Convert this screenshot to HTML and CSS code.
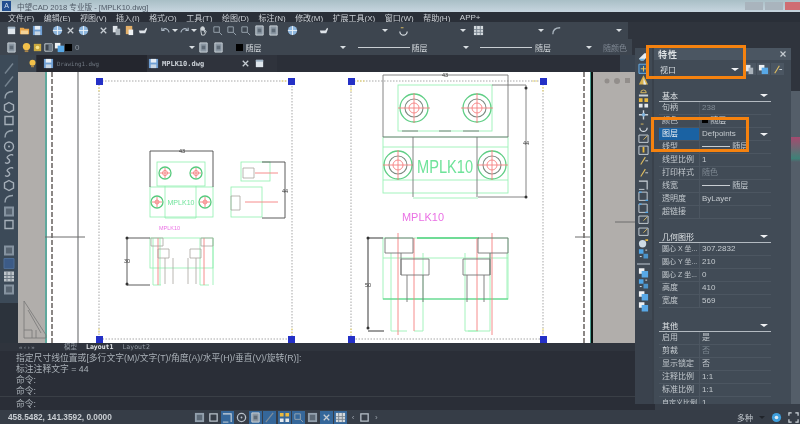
FILE: index.html
```html
<!DOCTYPE html>
<html lang="zh-CN">
<head>
<meta charset="utf-8">
<title>中望CAD 2018 专业版 - [MPLK10.dwg]</title>
<link rel="stylesheet" href="styles.css">
</head>
<body>
<svg class="sprite" width="0" height="0" aria-hidden="true">
  <symbol id="doc" viewBox="0 0 12 12"><path d="M2 2h8v8H2z" fill="#dfe6ec"/><path d="M2 2h8v2H2z" fill="#9fb4c6"/></symbol>
  <symbol id="folder" viewBox="0 0 12 12"><path d="M1 3h4l1 1h5v6H1z" fill="#e9a64b"/><path d="M2 6h8v4H2z" fill="#f3d398"/></symbol>
  <symbol id="save" viewBox="0 0 12 12"><path d="M1 1h10v10H1z" fill="#6f9fd4"/><path d="M3 1h6v4H3z" fill="#e6edf4"/><path d="M3 7h6v4H3z" fill="#c8d6e4"/></symbol>
  <symbol id="globe" viewBox="0 0 12 12"><circle cx="6" cy="6" r="5" fill="#8fb7de"/><path d="M1 6h10M6 1v10" stroke="#e9f0f6"/></symbol>
  <symbol id="x" viewBox="0 0 12 12"><path d="M3 3l6 6M9 3l-6 6" stroke="#c6ccd2" stroke-width="1.4"/></symbol>
  <symbol id="copy" viewBox="0 0 12 12"><path d="M2 1h5v7H2z" fill="#dfe4e9"/><path d="M5 4h5v7H5z" fill="#aab3bb"/></symbol>
  <symbol id="paste" viewBox="0 0 12 12"><path d="M2 1h7v9H2z" fill="#e3b06a"/><path d="M5 5h5v6H5z" fill="#eef1f3"/></symbol>
  <symbol id="brush" viewBox="0 0 12 12"><path d="M2 6h6l2-3 1 1-2 5H3z" fill="#dfe4e9"/></symbol>
  <symbol id="undo" viewBox="0 0 12 12"><path d="M10 8C9 4 6 3 3 5M2 3v3h3" fill="none" stroke="#aebac6" stroke-width="1.2"/></symbol>
  <symbol id="redo" viewBox="0 0 12 12"><path d="M2 8c1-4 4-5 7-3M10 3v3H7" fill="none" stroke="#aebac6" stroke-width="1.2"/></symbol>
  <symbol id="hand" viewBox="0 0 12 12"><path d="M3 6V3h1v3-4h1v4-4h1v4-3h1v5l1-2 1 1-2 4H4z" fill="none" stroke="#cfd5da"/></symbol>
  <symbol id="zoom" viewBox="0 0 12 12"><path d="M2 2h6v6H2z" fill="none" stroke="#9aa6b0"/><path d="M8 8l3 3" stroke="#9aa6b0"/></symbol>
  <symbol id="page" viewBox="0 0 12 12"><path d="M2 1h8v10H2z" fill="#8b97a3" stroke="#cfd6dc"/><path d="M4 4h4v4H4z" fill="#5f6b77"/></symbol>
  <symbol id="bulb" viewBox="0 0 12 12"><circle cx="6" cy="5" r="4" fill="#f2c04a"/><path d="M4 9h4v2H4z" fill="#a8844a"/></symbol>
  <symbol id="sun" viewBox="0 0 12 12"><path d="M2 2h8v8H2z" fill="#c9a83f"/><circle cx="6" cy="6" r="2" fill="#f7e28a"/></symbol>
  <symbol id="lock" viewBox="0 0 12 12"><path d="M2 2h8v8H2z" fill="none" stroke="#cfd6dc"/><path d="M6 2h4v8H6z" fill="#6f7b87"/></symbol>
  <symbol id="layers" viewBox="0 0 12 12"><path d="M1 1h6v6H1z" fill="#eef1f3"/><path d="M4 4h7v7H4z" fill="#58a8e6"/></symbol>
  <symbol id="line" viewBox="0 0 12 12"><path d="M2 11L10 1" stroke="#7f8d9a" stroke-width="1.4"/></symbol>
  <symbol id="arc" viewBox="0 0 12 12"><path d="M2 10C2 5 5 3 10 3" fill="none" stroke="#aab5bf" stroke-width="1.4"/></symbol>
  <symbol id="hex" viewBox="0 0 12 12"><path d="M6 1l4.500 2.500v5L6 11 1.500 8.500v-5z" fill="none" stroke="#b8c1ca" stroke-width="1.4"/></symbol>
  <symbol id="rect" viewBox="0 0 12 12"><path d="M2 2h8v8H2z" fill="none" stroke="#b8c1ca" stroke-width="1.4"/></symbol>
  <symbol id="circ" viewBox="0 0 12 12"><circle cx="6" cy="6" r="4.500" fill="none" stroke="#b8c1ca" stroke-width="1.400"/><circle cx="6" cy="6" r="1" fill="#b8c1ca"/></symbol>
  <symbol id="wave" viewBox="0 0 12 12"><path d="M2 9c3 2 6-1 4-3S3 4 6 2s4 0 4 0" fill="none" stroke="#b8c1ca" stroke-width="1.4"/></symbol>
  <symbol id="fill" viewBox="0 0 12 12"><path d="M1 1h10v10H1z" fill="#92a0ad"/><path d="M3 3h6v6H3z" fill="#5c6976"/></symbol>
  <symbol id="fillblue" viewBox="0 0 12 12"><path d="M1 1h10v10H1z" fill="#3d5f90" stroke="#51729f"/></symbol>
  <symbol id="table" viewBox="0 0 12 12"><path d="M1 1h10v10H1z" fill="#d4dade"/><path d="M1 5h10M1 8h10M4 1v10M8 1v10" stroke="#7a8691"/></symbol>
  <symbol id="eraser" viewBox="0 0 12 12"><path d="M1 8l6-6h4v3l-5 5H3z" fill="#e6ebef"/><path d="M1 8l2 2h3l1-2z" fill="#68b3e8"/></symbol>
  <symbol id="bluebox" viewBox="0 0 12 12"><path d="M1 1h10v10H1z" fill="#33597f" stroke="#6fb5ea"/><path d="M6 3v6M3 6h6" stroke="#f0c85a"/></symbol>
  <symbol id="tri" viewBox="0 0 12 12"><path d="M6 1l5 10H1z" fill="#d8b14d"/><path d="M6 4l3 7H6z" fill="#e6ebef"/></symbol>
  <symbol id="scale" viewBox="0 0 12 12"><path d="M3 7a3 3 0 016 0z" fill="none" stroke="#e0be60"/><path d="M1 9h10v2H1z" fill="#c9d1d8"/></symbol>
  <symbol id="grid" viewBox="0 0 12 12"><path d="M1 1h4v4H1zM7 1h4v4H7z" fill="#e9b93f"/><path d="M1 7h4v4H1zM7 7h4v4H7z" fill="#e4e8eb"/></symbol>
  <symbol id="move" viewBox="0 0 12 12"><path d="M6 1v10M1 6h10" stroke="#cdd5dc" stroke-width="1.500"/><circle cx="6" cy="6" r="2" fill="#7fb2dc"/></symbol>
  <symbol id="rot" viewBox="0 0 12 12"><path d="M2 7a4 4 0 008 0" fill="none" stroke="#d7dde2" stroke-width="1.300"/><path d="M3 3h3" stroke="#e0be60"/></symbol>
  <symbol id="stretch" viewBox="0 0 12 12"><path d="M1 3h10v8H1z" fill="none" stroke="#cdd5dc"/><path d="M6 8l4-4" stroke="#e0be60"/></symbol>
  <symbol id="mid" viewBox="0 0 12 12"><path d="M1 2h10v9H1z" fill="none" stroke="#cdd5dc"/><path d="M6 3v6" stroke="#e9b93f" stroke-width="2"/></symbol>
  <symbol id="slash" viewBox="0 0 12 12"><path d="M3 10l5-8" stroke="#e0be60" stroke-width="1.200"/><path d="M8 6h3" stroke="#cdd5dc"/></symbol>
  <symbol id="corner" viewBox="0 0 12 12"><path d="M1 2h9v9" fill="none" stroke="#cdd5dc" stroke-width="1.200"/><path d="M1 11h6" stroke="#cdd5dc"/></symbol>
  <symbol id="cornerb" viewBox="0 0 12 12"><path d="M1 2h9v9H1z" fill="none" stroke="#cdd5dc"/><path d="M1 2h3M8 11h3" stroke="#4fa6e8" stroke-width="1.500"/></symbol>
  <symbol id="ball" viewBox="0 0 12 12"><circle cx="5" cy="7" r="4" fill="#cfdbe5"/><path d="M8 2h3v2H8z" fill="#e9b93f"/></symbol>
  <symbol id="dots" viewBox="0 0 12 12"><path d="M1 1h5v5H1z" fill="#4fa6e8"/><path d="M6 6h5v5H6z" fill="#4fa6e8" opacity=".8"/><path d="M8 2h2M2 9h2" stroke="#e4e8eb"/></symbol>
  <symbol id="gear" viewBox="0 0 12 12"><circle cx="6" cy="6" r="5" fill="#3f9fdc"/><circle cx="6" cy="6" r="2" fill="#dfeaf2"/></symbol>
  <symbol id="full" viewBox="0 0 12 12"><path d="M1 4V1h3M8 1h3v3M11 8v3H8M4 11H1V8" fill="none" stroke="#cfd6dc" stroke-width="1.300"/></symbol>
</svg>

<div class="app">
  <div class="blurred">
    <header class="titlebar">
      <span class="logo">A</span>
      <span class="title">中望CAD 2018 专业版 - [MPLK10.dwg]</span>
      <span class="winbtns"><i class="wb"></i><i class="wb"></i><i class="wb wb-close"></i></span>
    </header>

    <nav class="menubar">
      <span>文件(F)</span><span>编辑(E)</span><span>视图(V)</span><span>插入(I)</span><span>格式(O)</span><span>工具(T)</span><span>绘图(D)</span><span>标注(N)</span><span>修改(M)</span><span>扩展工具(X)</span><span>窗口(W)</span><span>帮助(H)</span><span>APP+</span>
    </nav>

    <section class="toolbars">
      <div class="tb-row tb-row1">
        <div class="tools t-a"><svg class="i"><use href="#doc"/></svg><svg class="i"><use href="#folder"/></svg><svg class="i"><use href="#save"/></svg></div>
        <div class="tools t-b"><svg class="i"><use href="#globe"/></svg><svg class="i"><use href="#x"/></svg><svg class="i"><use href="#globe"/></svg></div>
        <div class="tools t-c"><svg class="i"><use href="#x"/></svg><svg class="i"><use href="#copy"/></svg><svg class="i"><use href="#paste"/></svg><svg class="i"><use href="#brush"/></svg></div>
        <div class="tools t-d"><svg class="i"><use href="#undo"/></svg><b class="arrow"></b><svg class="i"><use href="#redo"/></svg><b class="arrow"></b><svg class="i"><use href="#hand"/></svg><svg class="i z"><use href="#zoom"/></svg><svg class="i z"><use href="#zoom"/></svg><svg class="i z"><use href="#zoom"/></svg></div>
        <div class="tools t-e"><svg class="i"><use href="#page"/></svg><svg class="i"><use href="#page"/></svg><svg class="i i-gap"><use href="#globe"/></svg></div>
        <div class="combo c-1"><svg class="i"><use href="#brush"/></svg><b class="arrow"></b></div>
        <div class="combo c-2"><svg class="i"><use href="#rot"/></svg><b class="arrow"></b></div>
        <div class="combo c-3"><svg class="i"><use href="#table"/></svg><b class="arrow"></b></div>
        <div class="combo c-4"><svg class="i"><use href="#arc"/></svg><b class="arrow"></b></div>
      </div>
      <div class="tb-row tb-row2">
        <svg class="i i-first"><use href="#page"/></svg>
        <div class="tools t-f"><svg class="i"><use href="#bulb"/></svg><svg class="i"><use href="#sun"/></svg><svg class="i"><use href="#lock"/></svg><svg class="i"><use href="#layers"/></svg><i class="black"></i><span class="zero">0</span></div>
        <b class="arrow a-layer"></b>
        <div class="tools t-g"><svg class="i"><use href="#page"/></svg><svg class="i"><use href="#page"/></svg></div>
        <div class="combo c-5"><i class="black"></i><span>随层</span><b class="arrow"></b></div>
        <div class="combo c-6"><i class="ln"></i><span>随层</span><b class="arrow"></b></div>
        <div class="combo c-7"><i class="ln"></i><span>随层</span><b class="arrow"></b></div>
        <span class="dim c-8">随颜色</span>
      </div>
    </section>

    <div class="tabs">
      <svg class="i tab-icon"><use href="#bulb"/></svg>
      <div class="tab tab-off"><svg class="i"><use href="#save"/></svg><span>Drawing1.dwg</span></div>
      <div class="tab tab-on"><svg class="i"><use href="#save"/></svg><span>MPLK10.dwg</span><svg class="i tab-x"><use href="#x"/></svg><svg class="i"><use href="#doc"/></svg></div>
    </div>

    <main class="work">
      <aside class="leftbar">
        <svg class="t"><use href="#line"/></svg><svg class="t"><use href="#line"/></svg><svg class="t"><use href="#arc"/></svg><svg class="t"><use href="#hex"/></svg><svg class="t"><use href="#rect"/></svg><svg class="t"><use href="#arc"/></svg><svg class="t"><use href="#circ"/></svg><svg class="t"><use href="#wave"/></svg><svg class="t"><use href="#wave"/></svg><svg class="t"><use href="#hex"/></svg><svg class="t"><use href="#arc"/></svg><svg class="t"><use href="#fill"/></svg><svg class="t"><use href="#rect"/></svg>
        <span class="t-space"></span>
        <svg class="t"><use href="#fill"/></svg><svg class="t"><use href="#fillblue"/></svg><svg class="t"><use href="#table"/></svg><svg class="t"><use href="#fill"/></svg>
      </aside>
      <div class="canvas">
        <svg class="drawing" viewBox="18 72 617 271" width="617" height="271">
          <rect x="18" y="72" width="617" height="271" fill="#b1aeab"/>
          <rect x="45" y="72" width="2" height="271" fill="#5fa89c"/>
          <rect x="47" y="72" width="543" height="271" fill="#fff"/>
          <rect x="590" y="72" width="1" height="271" fill="#4c9c90"/>
          <rect x="591" y="72" width="2" height="271" fill="#0c1210"/>
          <path d="M52 72V343M584 72V343" stroke="#8b8785" stroke-width="2" stroke-dasharray="5 2"/>
          <path d="M78 72V343" stroke="#77797b" stroke-width="1.200"/>
          <path d="M45 237H85M575 237H590M615 222H635" stroke="#6c6c6c"/>
          <g fill="none" stroke="#777" stroke-width=".8"><path d="M24 301L46 335V338H24Z"/><path d="M28 310L41 333M24 330h8v8M36 330v8"/></g>
          <g fill="#8f8b88" opacity=".9"><circle cx="607" cy="81" r="2.500"/><circle cx="617" cy="81" r="3"/><rect x="625" y="78" width="5" height="5"/></g>

          <g fill="none" stroke="#a7a7a7" stroke-dasharray="1.500 1.500">
            <path d="M99 81H292V339H99ZM351 81H543V339H351Z"/>
          </g>
          <g stroke="#f1d960" stroke-dasharray="1.500 1.500" fill="none"><path d="M286 81h-6M357 81h8M99 87v6M99 333v-6M292 333v-6M351 87v6M543 87v6M351 333v-6M543 333v-6M537 81h-6"/></g>
          <g fill="#2430c6">
            <rect x="96" y="78" width="7" height="7"/><rect x="288" y="78" width="7" height="7"/><rect x="96" y="336" width="7" height="7"/><rect x="288" y="336" width="7" height="7"/>
            <rect x="348" y="78" width="7" height="7"/><rect x="540" y="78" width="7" height="7"/><rect x="348" y="336" width="7" height="7"/><rect x="540" y="336" width="7" height="7"/>
          </g>

          <!-- small view -->
          <g fill="none" stroke="#8ff0ae" stroke-width=".8">
            <rect x="157" y="162" width="48" height="24"/><rect x="150" y="187" width="63" height="30"/>
            <rect x="241" y="162" width="29" height="19"/><rect x="231" y="187" width="31" height="30"/>
            <rect x="150" y="238" width="63" height="30"/>
            <path d="M165 186V218H196V186M153 238v47h8M200 238v47h9M160 238v47M213 238v47"/>
          </g>
          <g fill="none" stroke="#58c97d" stroke-width="1.300">
            <circle cx="165" cy="173" r="6"/><circle cx="196" cy="173" r="6"/><circle cx="157" cy="202" r="6"/><circle cx="205" cy="202" r="6"/>
          </g>
          <g fill="none" stroke="#f58080" stroke-width=".9">
            <circle cx="165" cy="173" r="2.500"/><circle cx="196" cy="173" r="2.500"/><circle cx="157" cy="202" r="2"/><circle cx="205" cy="202" r="2"/>
            <path d="M160 173h10M191 173h10M152 202h10M200 202h10M165 168v10M196 168v10M157 197v10M205 197v10M255 173h23M245 202h33M158 238v47M204 238v47"/>
          </g>
          <g fill="none" stroke="#4a4a4a" stroke-width=".9">
            <path d="M150 187V151H213V187M127 238V285H150M127 238H150M262 162H285V218H262"/>
          </g>
          <g fill="none" stroke="#a8a49f" stroke-width=".8">
            <path d="M243 168h11v10h-11zM231 196h9v14h-9zM151 238h12v8h-12zM201 238h12v8h-12zM158 249h11v9h-11zM190 249h11v9h-11zM165 258v26M173 258v26M196 258v26M188 258v26"/>
          </g>
          <g class="dim-t"><text x="182" y="153">43</text><text x="285" y="193">44</text><text x="127" y="263">30</text></g>
          <text class="lbl-g" x="181" y="205" font-size="8" textLength="27" lengthAdjust="spacingAndGlyphs">MPLK10</text>
          <text class="lbl-m" x="169.500" y="230" font-size="6" textLength="21" lengthAdjust="spacingAndGlyphs">MPLK10</text>

          <!-- big view -->
          <g fill="none" stroke="#9af2b6" stroke-width=".9">
            <rect x="398" y="85" width="94" height="46"/><rect x="383" y="137" width="125" height="56"/>
            <path d="M413 198H478M383 180H508M383 147H508"/>
            <rect x="383" y="238" width="125" height="61"/>
            <path d="M383 258h125M391 253V331H407M423 253V331M465 253V331H490V253M507 253v46M414 331h9M468 331h10"/>
          </g>
          <path d="M417 238h62" stroke="#4fd07e" stroke-width="1.500"/>
          <path d="M383 299H508" stroke="#4fd07e" stroke-width="1.200"/>
          <g fill="none" stroke="#5fce85" stroke-width="1.300">
            <circle cx="414" cy="108" r="14"/><circle cx="477" cy="108" r="14"/><circle cx="398" cy="165" r="14"/><circle cx="492" cy="165" r="14"/>
          </g>
          <g fill="none" stroke="#7c8a80" stroke-width="1.100">
            <circle cx="414" cy="108" r="9"/><circle cx="477" cy="108" r="9"/><circle cx="398" cy="165" r="9"/><circle cx="492" cy="165" r="9"/>
          </g>
          <g fill="none" stroke="#f58080" stroke-width=".9">
            <circle cx="414" cy="108" r="5"/><circle cx="477" cy="108" r="5"/><circle cx="398" cy="165" r="5"/><circle cx="492" cy="165" r="5"/>
            <path d="M398 108h32M461 108h32M414 93v30M477 93v30M383 165h30M477 165h31M398 150v30M492 150v30M398 233V335M414 238V331M477 238V331M492 233V335"/>
          </g>
          <g fill="none" stroke="#777" stroke-width=".9">
            <path d="M383 137V75H508V137H383M492 85H526V197H478M413 137v60M477 137v60M402 131h16M439 131h12M463 131h16"/>
            <path d="M385 238h28v15h-28zM478 238h30v15h-30zM401 259h28v16h-28zM463 259h27v16h-27z"/>
            <path d="M407 275v27M423 275v27M467 275v27M484 275v27M401 253v22M490 253v22"/>
          </g>
          <path d="M368 238V328M368 238h15M368 331h16" fill="none" stroke="#7c7c7c" stroke-width="1.500"/>
          <g class="dim-t"><text x="445" y="77">43</text><text x="526" y="145">44</text><text x="368" y="287">50</text></g>
          <text class="lbl-g" x="445" y="173" font-size="19" textLength="56" lengthAdjust="spacingAndGlyphs">MPLK10</text>
          <text class="lbl-m" x="423" y="221" font-size="11" textLength="42" lengthAdjust="spacingAndGlyphs">MPLK10</text>
          <g fill="#333"><circle cx="526" cy="88" r="1.500"/><circle cx="526" cy="197" r="1.500"/><circle cx="368" cy="238" r="1.500"/><circle cx="368" cy="328" r="1.500"/><circle cx="127" cy="238" r="1.500"/><circle cx="127" cy="284" r="1.500"/></g>
        </svg>
      </div>
    </main>

    <div class="layouts">
      <span class="nav">« ‹ › »</span>
      <span class="lt">模型</span>
      <span class="lt lt-on">Layout1</span>
      <span class="lt">Layout2</span>
    </div>

    <section class="command">
      <p>指定尺寸线位置或[多行文字(M)/文字(T)/角度(A)/水平(H)/垂直(V)/旋转(R)]:</p>
      <p>标注注释文字 = 44</p>
      <p>命令:</p>
      <p>命令:</p>
      <p class="prompt">命令:</p>
    </section>

    <footer class="status">
      <span class="coords">458.5482, 141.3592, 0.0000</span>
      <div class="st-icons">
        <span class="st"><svg class="i"><use href="#fill"/></svg></span><span class="st"><svg class="i"><use href="#rect"/></svg></span><span class="st st-on"><svg class="i"><use href="#corner"/></svg></span><span class="st"><svg class="i"><use href="#circ"/></svg></span><span class="st st-on"><svg class="i"><use href="#page"/></svg></span><span class="st st-on"><svg class="i"><use href="#line"/></svg></span><span class="st st-on"><svg class="i"><use href="#grid"/></svg></span><span class="st st-on"><svg class="i"><use href="#zoom"/></svg></span><span class="st"><svg class="i"><use href="#fill"/></svg></span><span class="st st-on"><svg class="i"><use href="#x"/></svg></span><span class="st st-on"><svg class="i"><use href="#table"/></svg></span>
        <span class="st-nav">‹</span><span class="st"><svg class="i"><use href="#rect"/></svg></span><span class="st-nav">›</span>
      </div>
      <div class="st-right"><span>多种</span><b class="arrow arrow-dark"></b><svg class="i"><use href="#gear"/></svg><svg class="i"><use href="#full"/></svg></div>
    </footer>

    <div class="dock">
      <div class="dock-tools">
        <svg class="d"><use href="#eraser"/></svg><svg class="d"><use href="#bluebox"/></svg><svg class="d"><use href="#tri"/></svg><svg class="d"><use href="#scale"/></svg><svg class="d"><use href="#grid"/></svg><svg class="d"><use href="#move"/></svg><svg class="d"><use href="#rot"/></svg><svg class="d"><use href="#stretch"/></svg><svg class="d"><use href="#mid"/></svg><svg class="d"><use href="#slash"/></svg><svg class="d"><use href="#slash"/></svg><svg class="d"><use href="#corner"/></svg><svg class="d"><use href="#cornerb"/></svg><svg class="d"><use href="#cornerb"/></svg><svg class="d"><use href="#stretch"/></svg><svg class="d"><use href="#stretch"/></svg><svg class="d"><use href="#ball"/></svg><svg class="d"><use href="#dots"/></svg>
        <hr class="d-sep">
        <svg class="d"><use href="#layers"/></svg><svg class="d"><use href="#dots"/></svg><svg class="d"><use href="#layers"/></svg><svg class="d"><use href="#layers"/></svg>
      </div>
      <aside class="props">
        <div class="p-title"><strong>特性</strong><svg class="p-close"><use href="#x"/></svg></div>
        <div class="p-select">
          <div class="p-combo"><span>视口</span><b class="arrow arrow-big"></b></div>
          <span class="p-btn"><svg class="i"><use href="#copy"/></svg></span><span class="p-btn"><svg class="i"><use href="#layers"/></svg></span><span class="p-btn"><svg class="i"><use href="#slash"/></svg></span>
        </div>
        <div class="p-body">
          <h3 class="sec"><span>基本</span><b class="arrow arrow-big"></b></h3>
          <div class="row"><span>句柄</span><span class="off">238</span></div>
          <div class="row"><span>颜色</span><span><i class="black black-s"></i> <em>随层</em></span></div>
          <div class="row row-sel"><span>图层</span><span>Defpoints</span><b class="arrow arrow-big"></b></div>
          <div class="row"><span>线型</span><span><i class="ln ln-s"></i> 随层</span></div>
          <div class="row"><span>线型比例</span><span>1</span></div>
          <div class="row"><span>打印样式</span><span class="off">随色</span></div>
          <div class="row"><span>线宽</span><span><i class="ln ln-s"></i> 随层</span></div>
          <div class="row"><span>透明度</span><span>ByLayer</span></div>
          <div class="row"><span>超链接</span><span></span></div>

          <h3 class="sec sec-gap"><span>几何图形</span><b class="arrow arrow-big"></b></h3>
          <div class="row row-tight"><span>圆心 X 坐...</span><span>307.2832</span></div>
          <div class="row row-tight"><span>圆心 Y 坐...</span><span>210</span></div>
          <div class="row row-tight"><span>圆心 Z 坐...</span><span>0</span></div>
          <div class="row"><span>高度</span><span>410</span></div>
          <div class="row"><span>宽度</span><span>569</span></div>

          <h3 class="sec sec-gap"><span>其他</span><b class="arrow arrow-big"></b></h3>
          <div class="row"><span>启用</span><span>是</span></div>
          <div class="row"><span>剪裁</span><span class="off">否</span></div>
          <div class="row"><span>显示锁定</span><span>否</span></div>
          <div class="row"><span>注释比例</span><span>1:1</span></div>
          <div class="row"><span>标准比例</span><span>1:1</span></div>
          <div class="row row-tight"><span>自定义比例</span><span>1</span></div>
        </div>
      </aside>
      <div class="dock-edge"></div>
      <div class="dock-foot"></div>
    </div>
  </div>

  <div class="mark mark-a"></div>
  <div class="mark mark-b"></div>
</div>
</body>
</html>
```
FILE: styles.css
```css
* { box-sizing: border-box; }
html, body { margin: 0; padding: 0; }
body { background: #2a2e37; overflow: hidden; }
.sprite { position: absolute; }
.app {
  position: relative;
  width: 800px;
  height: 424px;
  overflow: hidden;
  font-family: "Liberation Sans", "Noto Sans CJK SC", sans-serif;
  font-size: 8px;
  color: #d5dade;
}
.blurred {
  display: flex;
  flex-direction: column;
  width: 800px;
  height: 424px;
  background: #2a2e37;
  filter: blur(0.7px);
}
.i { width: 11px; height: 11px; flex: none; display: block; }

/* title bar */
.titlebar {
  height: 12px;
  flex: none;
  display: flex;
  align-items: center;
  padding-left: 2px;
  background: linear-gradient(#a9bfc6, #c7d5df);
  color: #4e5965;
  font-size: 7.600px;
  white-space: nowrap;
}
.logo {
  width: 9px;
  height: 10px;
  background: #234f8f;
  color: #cfe0ef;
  font-size: 7px;
  line-height: 10px;
  text-align: center;
  margin-right: 6px;
}
.winbtns { margin-left: auto; display: flex; gap: 2px; }
.wb { width: 18px; height: 8px; background: #a9b4bd; display: block; }
.wb-close { width: 15px; background: #cf6d72; }

/* menu */
.menubar {
  height: 10px;
  flex: none;
  display: flex;
  align-items: center;
  gap: 9.500px;
  padding-left: 8px;
  background: #2a2f38;
  font-size: 8px;
  color: #ccd1d6;
  white-space: nowrap;
}

/* toolbars */
.toolbars { height: 33px; background: #2f343d; flex: none; }
.tb-row {
  height: 17px;
  width: 630px;
  display: flex;
  align-items: center;
  background: #3d454f;
  padding-left: 6px;
  white-space: nowrap;
}
.tb-row1 { width: 628px; }
.tb-row2 { height: 16px; width: 632px; }
.tools { display: flex; align-items: center; gap: 2px; flex: none; }
.t-b { margin-left: 9px; }
.t-c { margin-left: 9px; }
.t-d { margin-left: 12px; gap: 1px; }
.t-d .z { margin-left: 2px; }
.t-e { margin-left: 3px; gap: 3px; }
.i-gap { margin-left: 5px; }
.combo { display: flex; align-items: center; height: 100%; flex: none; }
.arrow {
  display: block;
  flex: none;
  width: 0;
  height: 0;
  border-left: 3px solid transparent;
  border-right: 3px solid transparent;
  border-top: 3px solid #d8dde1;
}
.arrow-big { border-left-width: 4px; border-right-width: 4px; border-top-width: 3px; border-top-color: #f0f2f4; }
.arrow-dark { border-top-color: #20242a; }
.c-1 { width: 70px; margin-left: 20px; justify-content: space-between; }
.c-2 { width: 68px; margin-left: 10px; justify-content: space-between; }
.c-3 { width: 71px; margin-left: 7px; justify-content: space-between; }
.c-4 { width: 71px; margin-left: 7px; justify-content: space-between; }
.dim { color: #7f8893; }
.i-first { margin-right: 4px; }
.t-f { gap: 0; margin-left: 0; }
.black { display: block; width: 7px; height: 7px; background: #000; flex: none; }
.zero { margin-left: 3px; color: #8d96a0; }
.a-layer { margin-left: 110px; }
.t-g { margin-left: 3px; gap: 4px; }
.c-5 { width: 110px; margin-left: 12px; gap: 2px; }
.c-5 .arrow { margin-left: auto; }
.c-6 { width: 111px; margin-left: 12px; gap: 1px; }
.c-6 .arrow { margin-left: auto; }
.c-7 { width: 112px; margin-left: 10.600px; gap: 3px; }
.c-7 .arrow { margin-left: auto; }
.ln { display: block; width: 52px; height: 1px; background: #c9ced3; flex: none; }
.c-8 { margin-left: 11px; }

/* drawing tabs */
.tabs {
  height: 17px;
  flex: none;
  display: flex;
  align-items: center;
  background: linear-gradient(90deg, #3d4650 36px, #2b2f38 36px, #2b2f38 620px, #3a4450 620px);
  padding-left: 28px;
  font-family: "DejaVu Sans Mono", "Noto Sans CJK SC", monospace;
}
.tab-icon { width: 9px; height: 9px; }
.tab { display: flex; align-items: center; gap: 3px; height: 100%; }
.tab-off { width: 110px; padding-left: 6px; color: #6f7781; background: #24262e; font-size: 5.800px; }
.tab-on { padding-left: 1px; color: #ccd2d8; font-weight: bold; background: #2f333c; width: 130px; font-size: 7px; }
.tab-x { margin-left: 33px; }

/* work area */
.work { display: flex; height: 271px; flex: none; }
.leftbar {
  width: 18px;
  flex: none;
  background: linear-gradient(#3c4a58 0, #3c4a58 86%, #2c333c 86%);
  display: flex;
  flex-direction: column;
  align-items: center;
  margin-top: -17px;
  height: 288px;
  padding-top: 7px;
  position: relative;
}
.t { width: 12px; height: 13px; flex: none; display: block; opacity: .85; }
.t-space { height: 13px; flex: none; }
.canvas { flex: 1; min-width: 0; }
.drawing { display: block; }
.dim-t text { font-size: 5.500px; fill: #333; text-anchor: middle; font-family: "Liberation Sans", sans-serif; }
.lbl-g { fill: #6fe39a; text-anchor: middle; font-family: "Liberation Sans", sans-serif; }
.lbl-m { fill: #ea70e4; text-anchor: middle; font-family: "Liberation Sans", sans-serif; }

/* layouts row */
.layouts {
  height: 8px;
  flex: none;
  display: flex;
  align-items: center;
  background: #2f343d;
  font-size: 7px;
  padding-left: 19px;
  line-height: 8px;
}
.nav { width: 45px; color: #8b939c; white-space: nowrap; font-size: 6px; }
.lt { color: #929aa3; margin-right: 9px; font-family: "DejaVu Sans Mono", "Noto Sans CJK SC", monospace; font-size: 6.500px; }
.lt-on { color: #e6e9ec; font-weight: bold; }

/* command */
.command {
  height: 59px;
  flex: none;
  padding-left: 16px;
  color: #a9b0b7;
  font-size: 8.800px;
  background: linear-gradient(#2a2e37 0, #2a2e37 76%, #3a3f46 76%, #3a3f46 78%, #2a2e37 78%);
}
.command p { margin: 0; height: 11px; line-height: 11px; white-space: nowrap; }
.command p:first-child { margin-top: 2px; }
.command .prompt { margin-top: 2px; }

/* status bar */
.status {
  height: 14px;
  flex: none;
  display: flex;
  align-items: center;
  background: #363d47;
  padding-left: 8px;
}
.coords { width: 184.500px; flex: none; font-weight: bold; color: #c8cdd2; font-size: 8.300px; white-space: nowrap; }
.st-icons { display: flex; align-items: center; }
.st { width: 13px; height: 13px; margin-right: 1.200px; display: flex; align-items: center; justify-content: center; flex: none; }
.st-on { background: #35679a; }
.st-nav { width: 9px; color: #9aa2ab; text-align: center; flex: none; }
.st-right { margin-left: auto; display: flex; align-items: center; gap: 6px; margin-right: 1px; color: #c2c8ce; }

/* properties dock */
.dock {
  position: absolute;
  left: 635px;
  top: 48px;
  width: 165px;
  height: 356px;
  display: flex;
  background: #3a424d;
}
.dock-foot {
  position: absolute;
  left: 20px;
  right: 0;
  top: 356px;
  height: 6px;
  background: #373e48;
}
.dock-tools {
  width: 17px;
  flex: none;
  height: 272px;
  background: #404a55;
  display: flex;
  flex-direction: column;
  align-items: center;
  padding-top: 3px;
}
.d { width: 11px; height: 11.600px; flex: none; display: block; }
.d-sep { width: 13px; height: 2px; border: 0; background: #7f8994; margin: 3px 0 2px; flex: none; }
.props {
  width: 139px;
  flex: none;
  background: #414b56;
  display: flex;
  flex-direction: column;
  overflow: hidden;
  border-left: 2px solid #39414b;
  font-size: 8px;
}
.p-title {
  height: 12px;
  background: #4b5662;
  display: flex;
  align-items: center;
  padding-left: 4px;
  flex: none;
}
.p-title strong { font-size: 9px; color: #dfe3e6; letter-spacing: 1px; }
.p-close { width: 10px; height: 10px; margin-left: auto; margin-right: 3px; }
.p-select {
  height: 18px;
  display: flex;
  align-items: center;
  padding-left: 4px;
  flex: none;
}
.p-combo {
  width: 82px;
  margin-right: 3px;
  display: flex;
  align-items: center;
  justify-content: space-between;
  padding: 0 1px 0 2px;
  font-size: 8px;
}
.p-btn {
  width: 13px;
  height: 12px;
  margin-right: 1px;
  display: flex;
  align-items: center;
  justify-content: center;
  background: #4b5662;
}
.p-body { padding: 12px 20px 0 5px; flex: 1; overflow: hidden; }
.sec {
  margin: 0;
  height: 12px;
  display: flex;
  align-items: center;
  justify-content: space-between;
  padding: 0 3px 0 3px;
  border-bottom: 1px solid #b3bac1;
  font-size: 8px;
  font-weight: normal;
  color: #dfe3e6;
}
.sec-gap { margin-top: 12px; }
.row {
  height: 13px;
  display: grid;
  grid-template-columns: 41px 1fr auto;
  align-items: center;
  border-bottom: 1px solid #4c5661;
  white-space: nowrap;
  font-size: 8px;
  color: #c4cacf;
  line-height: 12px;
}
.row > span:first-child { padding-left: 3px; border-right: 1px solid #4c5661; height: 12px; }
.row > span:nth-child(2) { padding-left: 2px; }
.row-tight > span:first-child { font-size: 7px; }
.row em { font-style: normal; display: inline-block; }
.off { color: #7f8993; }
.row-sel { padding-right: 3px; }
.row-sel > span:first-child { background: #1a62a3; color: #e7edf2; }
.black-s { display: inline-block; width: 6px; height: 5px; }
.ln-s { display: inline-block; width: 28px; vertical-align: middle; }
.dock-edge {
  flex: 1;
  background: linear-gradient(#2f343d 0, #2f343d 12%, #545e69 12%, #545e69 25%, #a54a6f 25%, #3e8278 31%, #545e69 32%);
}

/* orange annotation frames */
.mark { position: absolute; border: 3px solid #f5820f; pointer-events: none; }
.mark-a { left: 646px; top: 45px; width: 100px; height: 34px; }
.mark-b { left: 651px; top: 117px; width: 98px; height: 35px; }
```
